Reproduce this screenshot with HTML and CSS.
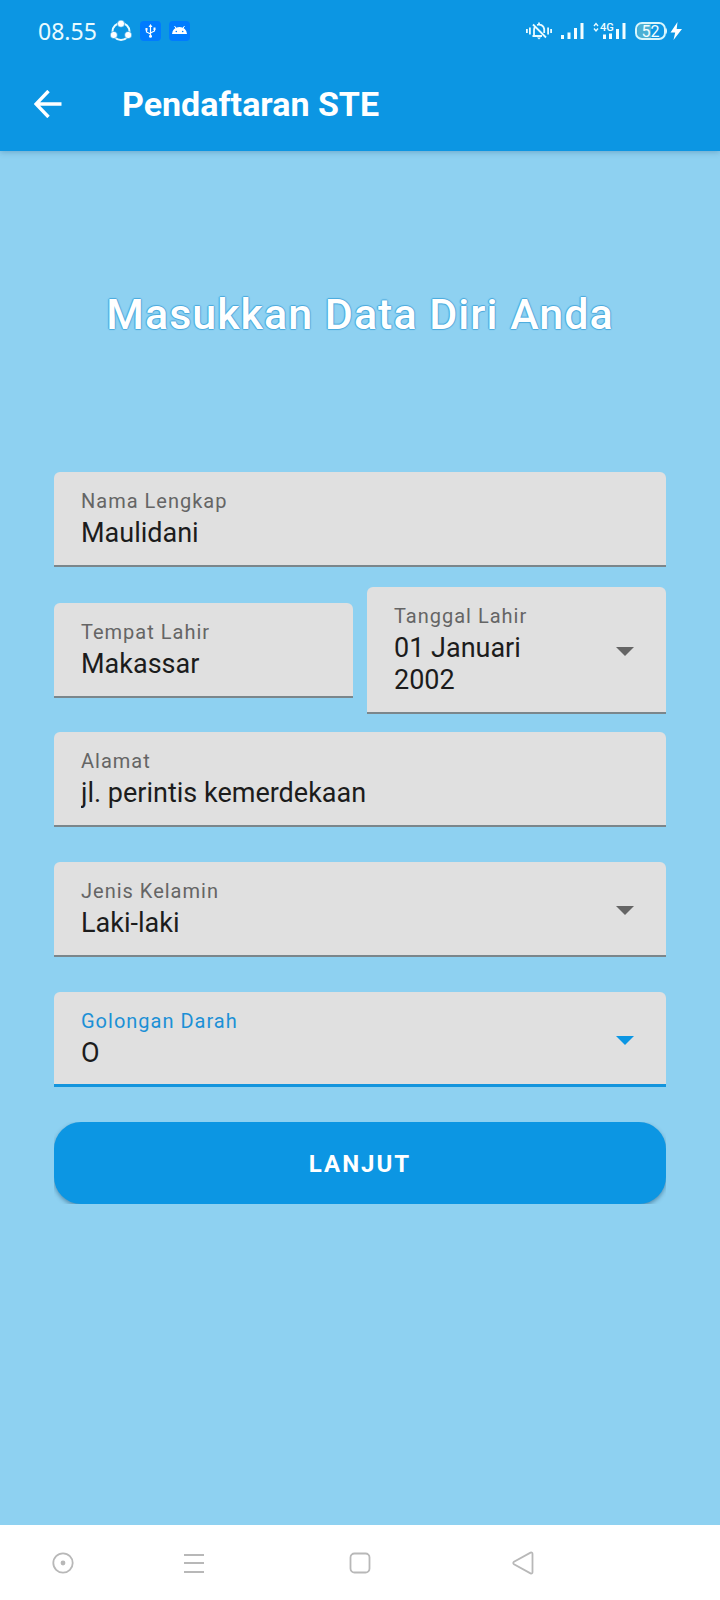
FILE: index.html
```html
<!DOCTYPE html>
<html lang="id">
<head>
<meta charset="utf-8">
<meta name="viewport" content="width=device-width, initial-scale=1">
<title>Pendaftaran STE</title>
<link rel="stylesheet" href="styles.css">
</head>
<body>
<div class="screen">
  <header class="top">
    <div class="status">
      <span class="clock">08.55</span>
      <div class="notices">
        <svg width="22" height="22" viewBox="0 0 22 22" aria-hidden="true">
          <circle cx="11" cy="11.500" r="8.500" fill="none" stroke="#e9fbff" stroke-width="2"/>
          <g fill="#fff" stroke="#0c96e3" stroke-width=".6"><circle cx="11" cy="3.700" r="3.600"/><circle cx="3.800" cy="15" r="3.600"/><circle cx="18.200" cy="15" r="3.600"/></g>
        </svg>
        <svg width="21" height="20" viewBox="0 0 21 20" aria-hidden="true">
          <rect width="21" height="20" rx="4" fill="#007bff"/>
          <g fill="none" stroke="#fff" stroke-width="1.200"><path d="M10.500 5v10M10.500 13L6.500 11V8.500M10.500 12L14.500 10V8"/></g>
          <path d="M10.500 3l2 3h-4zM5.500 7h2v2.500h-2zM13.500 6.500h2v2.500h-2z" fill="#fff"/><circle cx="10.500" cy="15.200" r="1.500" fill="#fff"/>
        </svg>
        <svg width="21" height="20" viewBox="0 0 21 20" aria-hidden="true">
          <rect width="21" height="20" rx="4" fill="#007bff"/>
          <path d="M3 13a7.500 7 0 0 1 15 0z" fill="#fff"/><path d="M5.500 5l2 3M15.500 5l-2 3" stroke="#fff" stroke-width="1"/>
          <circle cx="7.300" cy="10.500" r=".8" fill="#007bff"/><circle cx="13.700" cy="10.500" r=".8" fill="#007bff"/>
        </svg>
      </div>
      <div class="signals">
        <svg width="26" height="18" viewBox="0 0 26 18" aria-hidden="true">
          <g fill="none" stroke="#e9fbff" stroke-width="1.800"><path d="M.9 7v4M3.900 5.500v7M22.100 5.500v7M25.100 7v4M7 2.500L20 15.500M6.500 14h9.500M8 13.500V8q0-2 1-3M11 2.800q6-1 7.200 4.200v4M13 .5v2"/></g>
          <path d="M11 15.500h4l-2 2z" fill="#e9fbff"/>
        </svg>
        <svg width="23" height="18" viewBox="0 0 23 18" aria-hidden="true"><path d="M0 13h3v4H0zM6.500 10.500h3V17h-3zM13 6h3v11h-3zM19.500 1h3v16h-3z" fill="#f2fdff"/></svg>
        <svg width="33" height="18" viewBox="0 0 33 18" aria-hidden="true">
          <path d="M1 4l2-2.500L5 4M1 6.500L3 9l2-2.500" fill="none" stroke="#e9fbff" stroke-width="1.400"/>
          <path d="M10 12.500h3V17h-3zM16 11.500h3V17h-3zM23 7h3v10h-3zM29.500 1h3v16h-3z" fill="#f2fdff"/>
          <text x="7" y="9" class="network">4G</text>
        </svg>
        <svg width="47" height="18" viewBox="0 0 47 18" aria-hidden="true">
          <path d="M8 1h8v16H8q-6-1-6-8t6-8z" fill="#4ab0d4"/>
          <rect x="1" y="1" width="29" height="16" rx="6" fill="none" stroke="#d8f6fc" stroke-width="2"/>
          <path d="M31 5.500q2 3.500 0 7z" fill="#e9fbff"/>
          <text x="15.500" y="14.500" text-anchor="middle" class="battery">52</text>
          <path d="M42.500 0L35.500 10.500h4.700L38.500 18 47 7h-5.300z" fill="#fff"/>
        </svg>
      </div>
    </div>
    <div class="toolbar">
      <button class="back" type="button" aria-label="Kembali">
        <svg width="28" height="28" viewBox="0 0 28 28"><path d="M14.500 1L2 14l12.500 13M2 14h25.500" fill="none" stroke="#fff" stroke-width="3.400"/></svg>
      </button>
      <h1 class="bar-title">Pendaftaran STE</h1>
    </div>
  </header>

  <main class="content">
    <h2 class="heading">Masukkan Data Diri Anda</h2>
    <form class="form">
      <div class="field">
        <div class="field-text">
          <label class="label" for="nama">Nama Lengkap</label>
          <input class="value" id="nama" type="text" value="Maulidani">
        </div>
      </div>
      <div class="pair">
        <div class="field">
          <div class="field-text">
            <label class="label" for="tempat">Tempat Lahir</label>
            <input class="value" id="tempat" type="text" value="Makassar">
          </div>
        </div>
        <div class="field">
          <div class="field-text">
            <label class="label" for="tanggal">Tanggal Lahir</label>
            <textarea class="value" id="tanggal" rows="2" readonly>01 Januari 2002</textarea>
          </div>
          <svg class="arrow" width="18" height="9" viewBox="0 0 18 9" aria-hidden="true"><path d="M0 0h18L9 9z"/></svg>
        </div>
      </div>
      <div class="field">
        <div class="field-text">
          <label class="label" for="alamat">Alamat</label>
          <input class="value" id="alamat" type="text" value="jl. perintis kemerdekaan">
        </div>
      </div>
      <div class="field spaced">
        <div class="field-text">
          <label class="label" for="kelamin">Jenis Kelamin</label>
          <select class="value" id="kelamin"><option>Laki-laki</option></select>
        </div>
        <svg class="arrow" width="18" height="9" viewBox="0 0 18 9" aria-hidden="true"><path d="M0 0h18L9 9z"/></svg>
      </div>
      <div class="field spaced active">
        <div class="field-text">
          <label class="label" for="darah">Golongan Darah</label>
          <select class="value" id="darah"><option>O</option></select>
        </div>
        <svg class="arrow" width="18" height="9" viewBox="0 0 18 9" aria-hidden="true"><path d="M0 0h18L9 9z"/></svg>
      </div>
      <div class="actions">
        <button class="submit" type="button">LANJUT</button>
      </div>
    </form>
  </main>

  <nav class="system-nav" aria-label="Navigasi sistem">
    <button class="nav-button" type="button" aria-label="Bantuan"><svg width="24" height="24" viewBox="0 0 24 24"><circle cx="12" cy="12" r="9.700"/><circle class="dot" cx="12" cy="12" r="2.400"/></svg></button>
    <button class="nav-button" type="button" aria-label="Menu"><svg width="24" height="24" viewBox="0 0 24 24"><path d="M2 4h20M2 12h20M2 21h20"/></svg></button>
    <button class="nav-button" type="button" aria-label="Beranda"><svg width="24" height="24" viewBox="0 0 24 24"><rect x="2.500" y="2.500" width="19" height="19" rx="4"/></svg></button>
    <button class="nav-button" type="button" aria-label="Kembali sistem"><svg width="24" height="24" viewBox="0 0 24 24"><path d="M21.500 3v18q0 2-2 1.400L3 13.200q-1.500-1.200 0-2.400L19.500 1.600q2-.6 2 1.400z"/></svg></button>
  </nav>
</div>
</body>
</html>
```

FILE: styles.css
```css
* {
  box-sizing: border-box;
}

body {
  margin: 0;
  background: #8ed1f1;
  font-family: Roboto, "Liberation Sans", sans-serif;
}

button,
input,
select,
textarea {
  margin: 0;
  padding: 0;
  border: 0;
  background: none;
  font-family: inherit;
}

svg {
  display: block;
  flex: none;
}

.screen {
  display: flex;
  flex-direction: column;
  min-height: 100vh;
}

.top {
  background: #0c96e3;
  box-shadow: 0 1px 6px rgba(0, 40, 80, 0.25);
  color: #fff;
}

.status {
  display: flex;
  align-items: center;
  height: 56px;
  padding: 6px 38px 0;
}

.clock {
  font-family: "Noto Sans", sans-serif;
  font-size: 23px;
  line-height: 30px;
  color: #e9fbff;
}

.notices {
  display: flex;
  align-items: center;
  gap: 8px;
  margin-left: 13px;
}

.signals {
  display: flex;
  align-items: center;
  gap: 9px;
  margin-left: auto;
}

.network {
  fill: #f2fdff;
  font-size: 11px;
  font-weight: 500;
}

.battery {
  fill: #f2fdff;
  font-size: 16px;
}

.toolbar {
  display: flex;
  align-items: center;
  gap: 60px;
  height: 95px;
  padding: 0 34px;
}

.back {
  color: #fff;
}

.bar-title {
  margin: 0;
  font-size: 34px;
  line-height: 40px;
  font-weight: 700;
}

.content {
  flex: 1;
  padding: 137px 54px 40px;
}

.heading {
  margin: 0 0 132px;
  color: #fff;
  font-size: 43px;
  line-height: 52px;
  font-weight: 500;
  letter-spacing: 1px;
  text-align: center;
  text-shadow: 1px 0 1px #4aa9dd, -1px 0 1px #4aa9dd, 0 1px 1px #4aa9dd, 0 -1px 1px #4aa9dd;
}

.form {
  display: flex;
  flex-direction: column;
}

.field {
  display: flex;
  align-items: center;
  padding: 17px 32px 16px 27px;
  border-bottom: 2px solid #7b868b;
  border-radius: 6px 6px 0 0;
  background: #e0e0e0;
}

.field-text {
  display: flex;
  flex: 1;
  flex-direction: column;
  gap: 4px;
  min-width: 0;
}

.label {
  color: #656565;
  font-size: 20px;
  line-height: 24px;
  letter-spacing: 1px;
}

.value {
  width: 100%;
  height: 32px;
  color: #1c1c1c;
  font-size: 27px;
  line-height: 32px;
  outline: 0;
  appearance: none;
}

textarea.value {
  display: block;
  height: 64px;
  padding-right: 40px;
  overflow: hidden;
  resize: none;
}

.arrow {
  margin-top: 2px;
  fill: #656565;
}

.pair {
  display: grid;
  grid-template-columns: 1fr 1fr;
  align-items: center;
  gap: 14px;
  margin: 20px 0 18px;
}

.spaced {
  margin-top: 35px;
}

.active {
  padding-bottom: 15px;
  border-bottom: 3px solid #1495dd;
}

.active .label {
  color: #1c90d6;
}

.active .arrow {
  fill: #0c96e3;
}

.actions {
  display: flex;
  margin-top: 35px;
  overflow: hidden;
}

.submit {
  flex: 1;
  padding: 26px 24px 24px;
  border-radius: 27px;
  background: #0c96e3;
  box-shadow: 0 2px 4px rgba(0, 40, 70, 0.4);
  color: #fff;
  font-size: 24px;
  line-height: 32px;
  font-weight: 700;
  letter-spacing: 2px;
}

.system-nav {
  display: grid;
  grid-template-columns: 126fr 136fr 196fr 130fr 132fr;
  height: 75px;
  background: #fff;
}

.nav-button {
  display: grid;
  place-items: center;
}

.nav-button svg {
  fill: none;
  stroke: #b8b8b8;
  stroke-width: 1.800;
}

.nav-button .dot {
  fill: #b8b8b8;
  stroke: none;
}
```
